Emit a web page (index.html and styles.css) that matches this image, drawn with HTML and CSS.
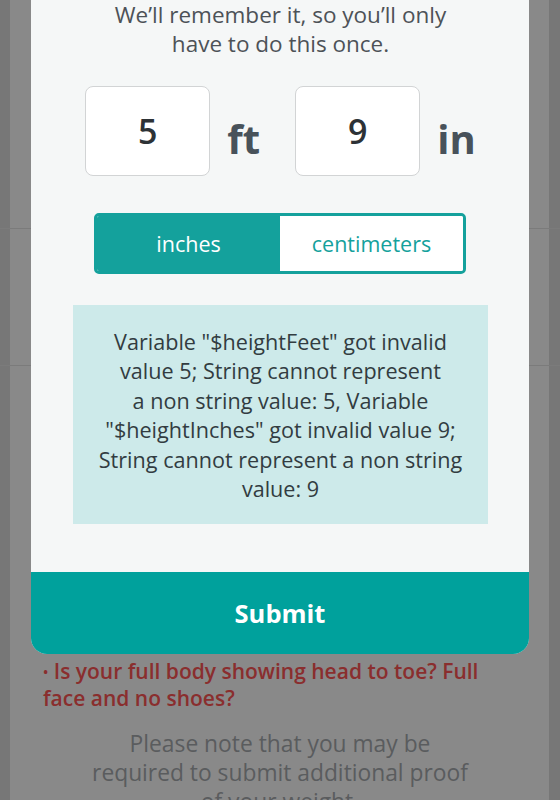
FILE: index.html
```html
<!DOCTYPE html>
<html lang="en">
<head>
    <meta charset="UTF-8">
    <meta name="viewport" content="width=device-width, initial-scale=1.0">
    <title>Your height</title>
    <link rel="stylesheet" href="styles.css">
</head>
<body>
    <div class="page">
        <div class="modal">
            <div class="modal-body">
                <p class="intro">We’ll remember it, so you’ll only<br>have to do this once.</p>

                <div class="height-row">
                    <input type="text" class="height-input" value="5">
                    <span class="unit">ft</span>
                    <input type="text" class="height-input" value="9">
                    <span class="unit">in</span>
                </div>

                <div class="unit-toggle">
                    <button class="unit-btn active">inches</button>
                    <button class="unit-btn">centimeters</button>
                </div>

                <div class="error-box">
                    Variable "$heightFeet" got invalid<br>
                    value 5; String cannot represent<br>
                    a non string value: 5, Variable<br>
                    "$heightInches" got invalid value 9;<br>
                    String cannot represent a non string<br>
                    value: 9
                </div>
            </div>
            <button class="btn-submit">Submit</button>
        </div>

        <p class="hint"><span class="bullet">•</span> Is your full body showing head to toe? Full<br>face and no shoes?</p>
        <p class="note">Please note that you may be<br>required to submit additional proof<br>of your weight.</p>
    </div>
</body>
</html>
```

FILE: styles.css
```css
* {
    margin: 0;
    padding: 0;
    box-sizing: border-box;
    font-family: 'Open Sans', 'Lato', sans-serif;
}
body {
    background:
        linear-gradient(to bottom, transparent 228px, #7b7b7b 228px, #7b7b7b 229px, transparent 229px, transparent 365px, #7b7b7b 365px, #7b7b7b 366px, transparent 366px),
        linear-gradient(to right, #777 0, #777 10px, #898989 10px, #898989 549px, #777 549px);
    min-height: 800px;
    overflow: hidden;
}
.page {
    padding: 0 31px;
    height: 800px;
    overflow: hidden;
}
.modal {
    background: #f5f7f7;
    border-radius: 0 0 16px 16px;
    overflow: hidden;
}
.modal-body {
    padding: 0 41px 48px 42px;
}
.intro {
    font-size: 22.5px;
    line-height: 29px;
    color: #4d5257;
    text-align: center;
}
.height-row {
    display: flex;
    justify-content: center;
    align-items: center;
    margin-top: 28px;
}
.height-input {
    width: 125px;
    height: 90px;
    background: white;
    border: 1px solid #d2d4d5;
    border-radius: 8px;
    text-align: center;
    font-size: 34px;
    font-weight: 600;
    color: #2d3236;
    outline: none;
}
.unit {
    font-size: 40px;
    line-height: 40px;
    font-weight: bold;
    color: #48525a;
    padding-top: 15px;
    margin: 0 35px 0 17px;
}
.unit:last-child {
    margin-right: 0;
}
.unit-toggle {
    display: flex;
    margin: 37px 22px 0 21px;
    height: 61px;
    border: 3px solid #14a19c;
    border-radius: 5px;
    overflow: hidden;
}
.unit-btn {
    flex: 1;
    border: none;
    background: white;
    color: #14a19c;
    font-size: 21.5px;
}
.unit-btn.active {
    background: #14a19c;
    color: white;
}
.error-box {
    margin-top: 31px;
    background: #cdeaea;
    padding: 22px 6px 21px;
    text-align: center;
    font-size: 21.6px;
    line-height: 29.4px;
    color: #323c41;
}
.btn-submit {
    display: block;
    width: 100%;
    height: 82px;
    border: none;
    background: #00a19c;
    color: white;
    font-size: 25.5px;
    font-weight: bold;
}
.hint {
    margin-top: 4px;
    padding-left: 12px;
    font-size: 21px;
    line-height: 27px;
    font-weight: 600;
    color: #8a2e2e;
}
.bullet {
    font-size: 14px;
    vertical-align: 2px;
}
.note {
    margin-top: 17px;
    text-align: center;
    font-size: 22.8px;
    line-height: 29px;
    color: #5a5c5e;
}
```
